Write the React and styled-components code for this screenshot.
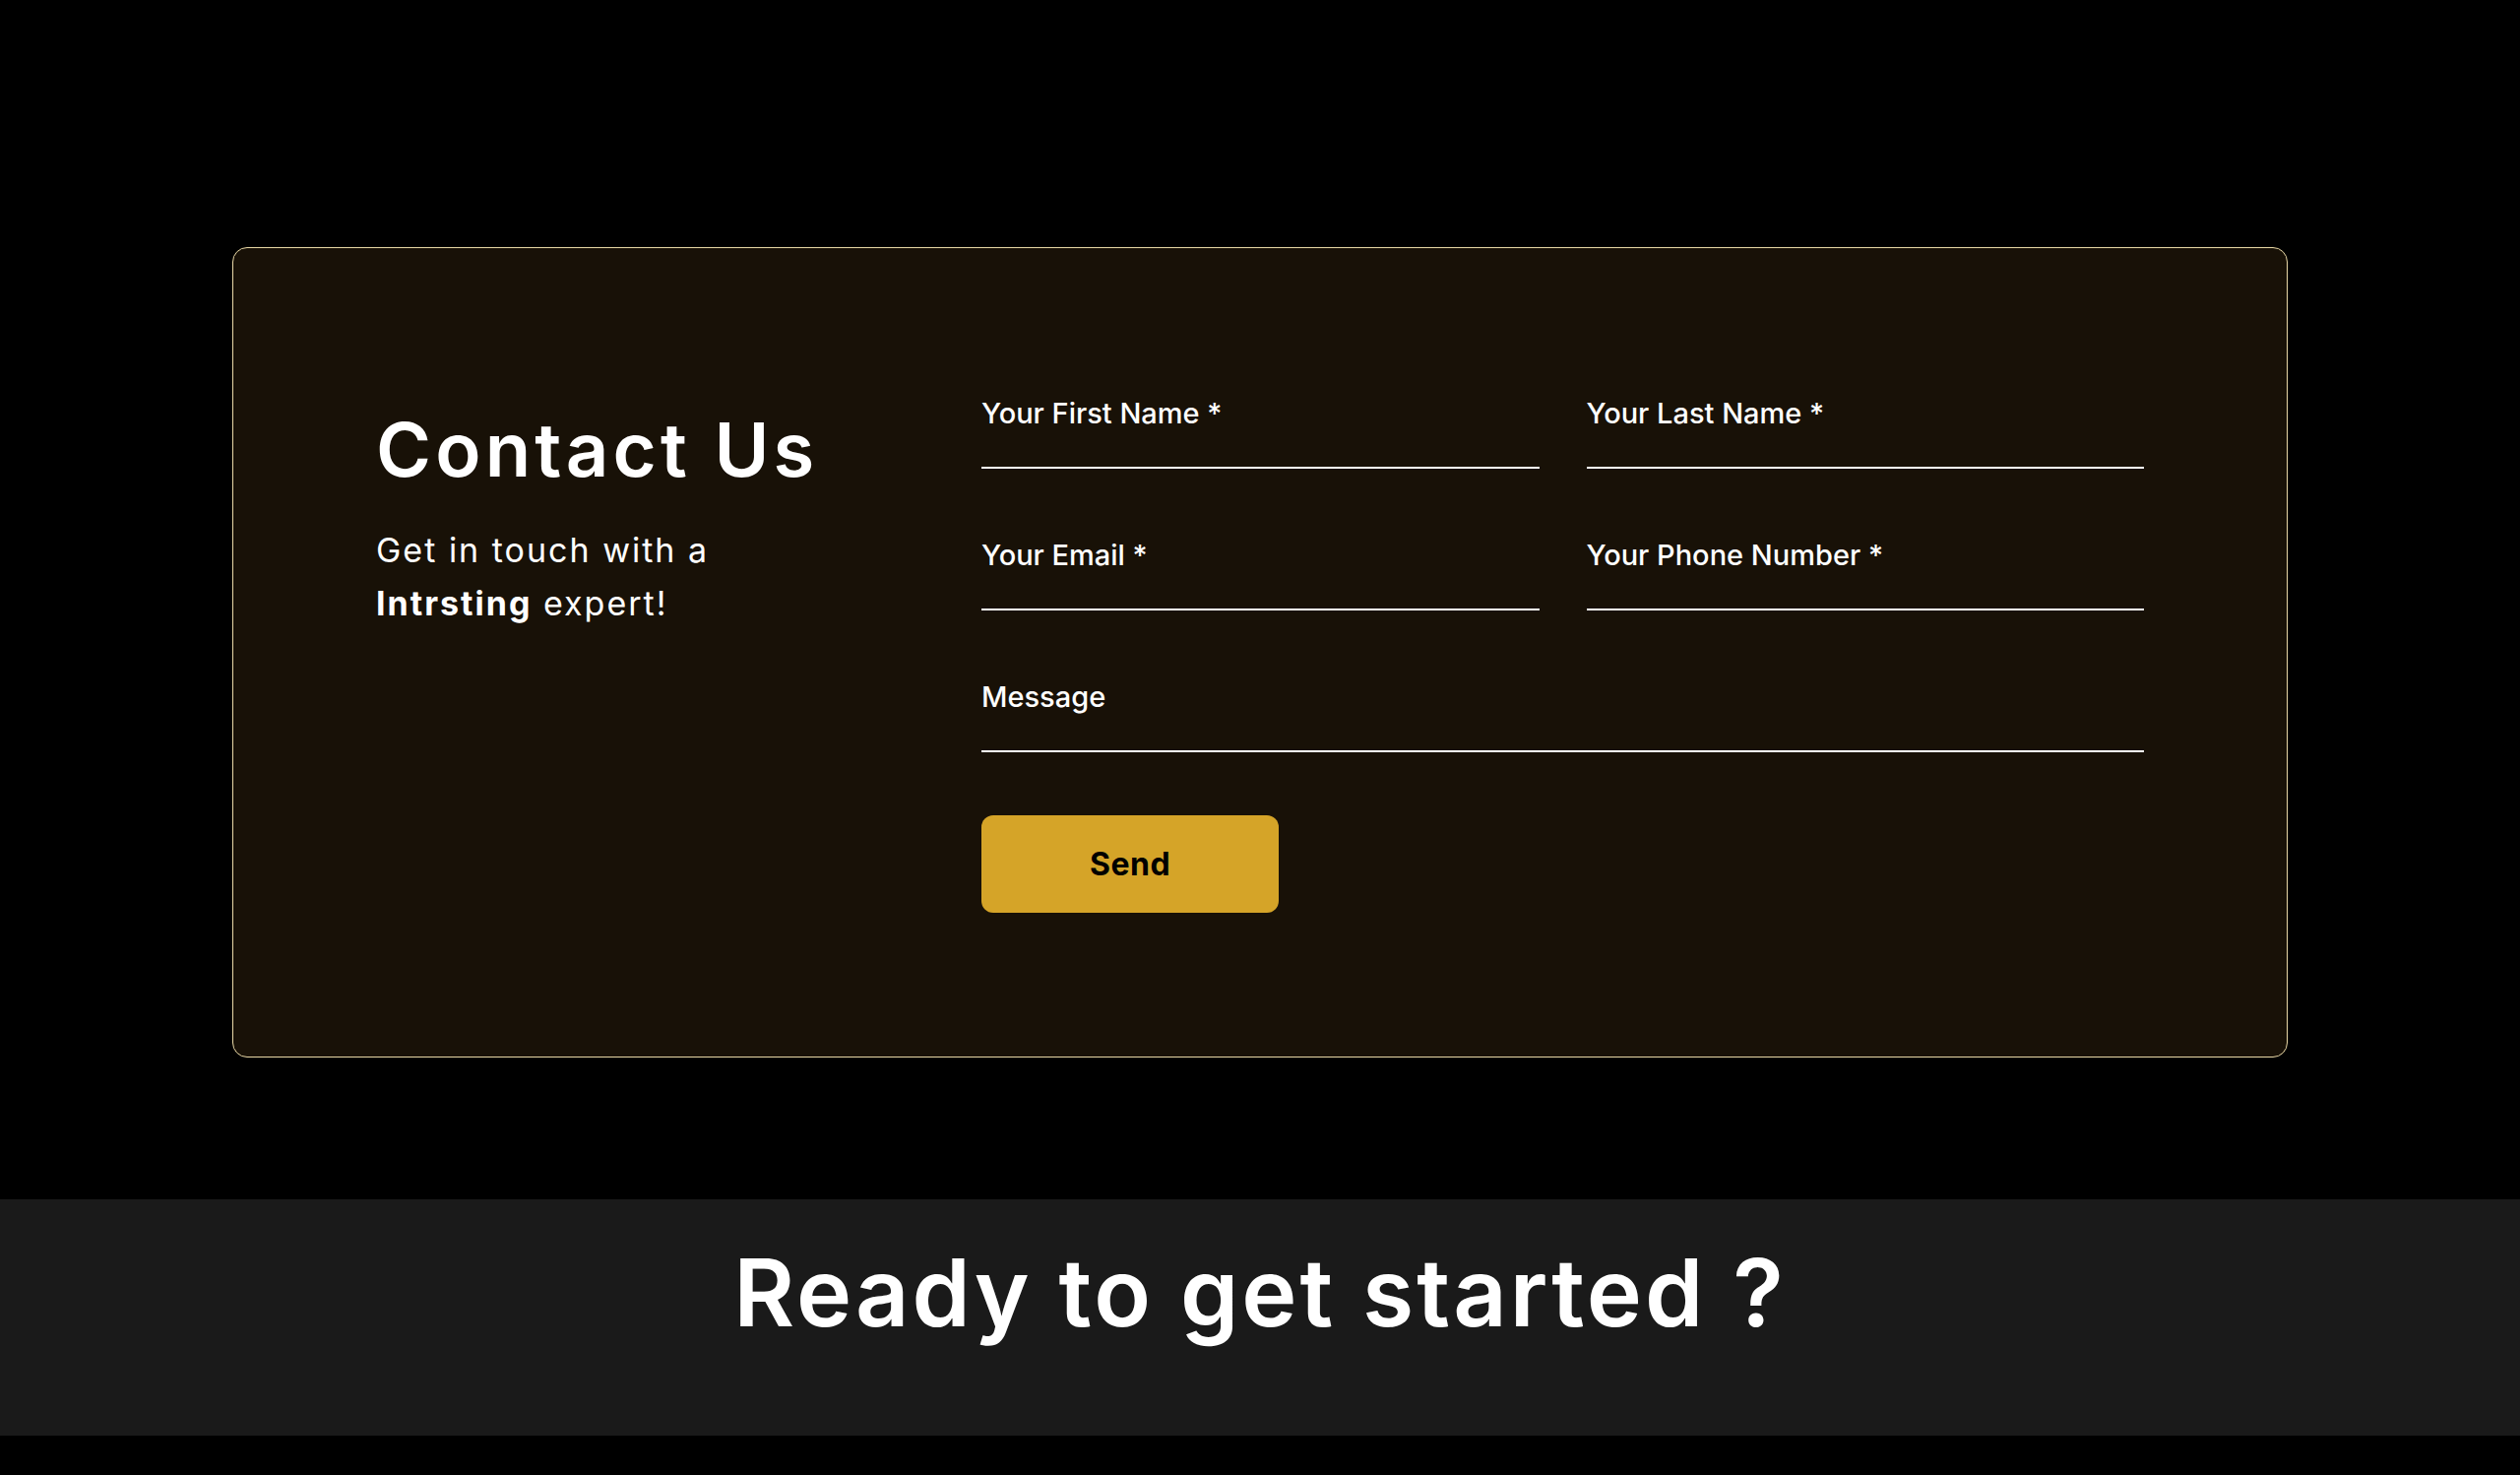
import React from "react";
import styled, { createGlobalStyle } from "styled-components";

const GlobalStyle = createGlobalStyle`
  html, body {
    margin: 0;
    padding: 0;
    background: #000;
  }
  body {
    font-family: "Inter", "Noto Sans", "Liberation Sans", sans-serif;
    color: #fff;
  }
  * { box-sizing: border-box; }
`;

const Page = styled.div`
  background: #000;
  min-height: 1498px;
`;

const ContactSection = styled.section`
  padding: 251px 236px 144px;
`;

const Card = styled.div`
  background: #181107;
  border: 1px solid #e9d8a6;
  border-radius: 15px;
  padding: 146px 145px;
  display: grid;
  grid-template-columns: 615px 1fr;
`;

const Intro = styled.div`
  display: flex;
  flex-direction: column;
`;

const Heading = styled.h2`
  margin: 20px 0 0;
  font-size: 76px;
  line-height: 76px;
  font-weight: 600;
  letter-spacing: 4.2px;
  color: #fff;
`;

const Lead = styled.p`
  margin: 38px 0 0;
  font-size: 34px;
  line-height: 54px;
  font-weight: 400;
  letter-spacing: 2px;
  color: #fff;
  max-width: 420px;

  strong {
    font-weight: 700;
  }
`;

const Form = styled.form`
  display: flex;
  flex-direction: column;
  align-items: flex-start;
`;

const Fields = styled.div`
  width: 100%;
  display: grid;
  grid-template-columns: 1fr 1fr;
  column-gap: 48px;
  row-gap: 66px;
`;

const Field = styled.label`
  display: flex;
  flex-direction: column;
  grid-column: ${(p) => (p.$wide ? "1 / -1" : "auto")};
`;

const LabelText = styled.span`
  font-size: 29px;
  line-height: 44px;
  font-weight: 500;
  letter-spacing: 0;
  color: #fff;
`;

const Input = styled.input`
  height: 34px;
  border: none;
  border-bottom: 2px solid #fff;
  background: transparent;
  color: #fff;
  font: inherit;
  font-size: 24px;
  outline: none;
  padding: 0;
`;

const SendButton = styled.button`
  margin-top: 64px;
  width: 302px;
  height: 99px;
  border: none;
  border-radius: 12px;
  background: #d5a428;
  color: #000;
  font-family: "Inter", "Noto Sans", sans-serif;
  font-size: 32px;
  font-weight: 700;
  letter-spacing: 0.5px;
  cursor: pointer;
`;

const Banner = styled.section`
  background: #1a1a1a;
  height: 240px;
  padding-top: 47px;
  text-align: center;
`;

const BannerTitle = styled.h2`
  margin: 0;
  font-size: 95px;
  line-height: 95px;
  font-weight: 600;
  letter-spacing: 3px;
  color: #fff;
`;

const fields = [
  { label: "Your First Name *", type: "text" },
  { label: "Your Last Name *", type: "text" },
  { label: "Your Email *", type: "email" },
  { label: "Your Phone Number *", type: "tel" },
];

export default function App() {
  return (
    <Page>
      <GlobalStyle />
      <ContactSection>
        <Card>
          <Intro>
            <Heading>Contact Us</Heading>
            <Lead>
              Get in touch with a <strong>Intrsting</strong> expert!
            </Lead>
          </Intro>
          <Form onSubmit={(e) => e.preventDefault()}>
            <Fields>
              {fields.map((f) => (
                <Field key={f.label}>
                  <LabelText>{f.label}</LabelText>
                  <Input type={f.type} />
                </Field>
              ))}
              <Field $wide>
                <LabelText>Message</LabelText>
                <Input type="text" />
              </Field>
            </Fields>
            <SendButton type="submit">Send</SendButton>
          </Form>
        </Card>
      </ContactSection>
      <Banner>
        <BannerTitle>Ready to get started ?</BannerTitle>
      </Banner>
    </Page>
  );
}
